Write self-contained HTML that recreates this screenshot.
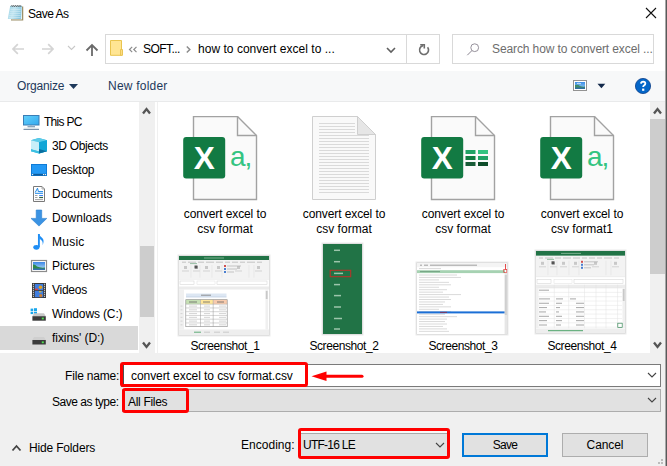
<!DOCTYPE html>
<html><head><meta charset="utf-8">
<style>
*{margin:0;padding:0;box-sizing:border-box}
html,body{width:667px;height:466px;overflow:hidden}
body{position:relative;background:#f0f0f0;font-family:"Liberation Sans",sans-serif;font-size:12px;color:#000}
.a{position:absolute}
.t{position:absolute;white-space:nowrap;line-height:12px;font-size:12px}
</style></head><body>
<!-- top white area -->
<div class="a" style="left:0;top:0;width:667px;height:71px;background:#fff"></div>
<!-- title -->
<svg class="a" style="left:0;top:0" width="30" height="26" viewBox="0 0 30 26">
  <defs><linearGradient id="np" x1="0" y1="0" x2="1" y2="0.3"><stop offset="0" stop-color="#9ad3e6"/><stop offset="0.5" stop-color="#c3e6f1"/><stop offset="1" stop-color="#8cc8e0"/></linearGradient></defs>
  <path d="M11 19.8 H22.6 V6.5" fill="none" stroke="#9c9068" stroke-width="1.3"/>
  <path d="M11.5 7 H22 V19.2 H11.5 Z" fill="#fdfdfd"/>
  <path d="M10.2 5.8 H21.8 L21.2 19 H7.8 Z" fill="url(#np)"/>
  <path d="M10.5 9.5 H20.5 M10 11.5 H20.5 M9.6 13.5 H20.5 M9.2 15.5 H20.5 M8.8 17.5 H20.5" stroke="#d6eef7" stroke-width="0.7" opacity="0.8"/>
  <path d="M11 6.5 Q11.9 4.6 12.8 6.5 Q13.7 4.6 14.6 6.5 Q15.5 4.6 16.4 6.5 Q17.3 4.6 18.2 6.5 Q19.1 4.6 20 6.5 Q20.6 5 21.2 6.3" stroke="#333" stroke-width="0.9" fill="none"/>
</svg>
<div class="t" id="title" style="letter-spacing:-0.5px;left:28px;top:8px;">Save As</div>
<!-- close -->
<svg class="a" style="left:645px;top:7px" width="12" height="12" viewBox="0 0 12 12"><path d="M1 1 L11 11 M11 1 L1 11" stroke="#111" stroke-width="1.1"/></svg>

<!-- nav arrows -->
<svg class="a" style="left:0;top:30px" width="110" height="30" viewBox="0 30 110 30"><path d="M13.2 49 H24 M17.8 44.2 L13 49 L17.8 53.8 M42 49 H52.8 M48.2 44.2 L53 49 L48.2 53.8" stroke="#d4d4d4" stroke-width="1.7" fill="none"/></svg>

<svg class="a" style="left:67px;top:45px" width="9" height="6" viewBox="0 0 9 6"><path d="M1 1 L4.5 4.5 L8 1" stroke="#c8c8c8" stroke-width="1.1" fill="none"/></svg>
<svg class="a" style="left:85px;top:43px" width="14" height="14" viewBox="0 0 14 14"><path d="M7 13 V2 M1.5 7.5 L7 2 L12.5 7.5" stroke="#6a6a6a" stroke-width="1.8" fill="none"/></svg>

<!-- address bar -->
<div class="a" style="left:105px;top:34px;width:335px;height:30px;border:1px solid #d9d9d9;background:#fff"></div>
<div class="a" style="left:406px;top:35px;width:1px;height:28px;background:#d9d9d9"></div>
<svg class="a" style="left:110px;top:40px" width="14" height="17" viewBox="0 0 14 17">
  <path d="M0.5 0.5 H11.5 V15.3 H0.5 Z" fill="#ffe593" stroke="#e9c44e" stroke-width="1"/>
  <path d="M10.6 9.5 H12.5 V15.3 H10.6 Z" fill="#ffe08a" stroke="#e6bf48" stroke-width="0.9"/>
</svg>
<svg class="a" style="left:128px;top:45px" width="10" height="9" viewBox="0 0 10 9"><path d="M4.2 1.8 L1.5 4.5 L4.2 7.2 M8.5 1.8 L5.8 4.5 L8.5 7.2" stroke="#8c8c8c" stroke-width="1.2" fill="none"/></svg>
<div class="t" id="soft" style="letter-spacing:-0.55px;left:143px;top:43px;">SOFT...</div>
<svg class="a" style="left:185px;top:45px" width="7" height="9" viewBox="0 0 7 9"><path d="M1.8 1.5 L4.8 4.5 L1.8 7.5" stroke="#8c8c8c" stroke-width="1.5" fill="none"/></svg>
<div class="t" id="addr" style="letter-spacing:0.027px;left:198px;top:43px;">how to convert excel to ...</div>
<svg class="a" style="left:386px;top:47px" width="10" height="7" viewBox="0 0 10 7"><path d="M1 1 L5 5 L9 1" stroke="#606060" stroke-width="1.6" fill="none"/></svg>
<svg class="a" style="left:410px;top:38px" width="30" height="22" viewBox="0 0 30 22"><path d="M17.6 9.3 A4.5 4.5 0 1 1 13.2 7.6" stroke="#6e6e6e" stroke-width="1.6" fill="none"/><path d="M10.2 6.7 H14.3 V10.6" stroke="#6e6e6e" stroke-width="1.6" fill="none"/></svg>

<!-- search -->
<div class="a" style="left:452px;top:34px;width:202px;height:30px;border:1px solid #d9d9d9;background:#fff"></div>
<svg class="a" style="left:466px;top:43px" width="14" height="13" viewBox="0 0 14 13"><circle cx="8.7" cy="4.7" r="3.9" stroke="#8a8490" stroke-width="0.9" fill="none"/><path d="M5.9 7.6 L1.3 12.2" stroke="#8a8490" stroke-width="1"/></svg>
<div class="t" id="search" style="letter-spacing:-0.11px;left:492px;top:43px;color:#6d6d6d">Search how to convert excel ...</div>

<!-- toolbar -->
<div class="a" style="left:0;top:71px;width:667px;height:31px;background:#f7f8f9;border-bottom:1px solid #e9eaeb"></div>
<div class="t" id="org" style="letter-spacing:-0.186px;left:17px;top:80px;color:#1e395b">Organize</div>
<svg class="a" style="left:69px;top:84px" width="9" height="5" viewBox="0 0 9 5"><path d="M0 0 H9 L4.5 5 Z" fill="#1e395b"/></svg>
<div class="t" id="newf" style="letter-spacing:0.222px;left:108px;top:80px;color:#1e395b">New folder</div>
<svg class="a" style="left:573px;top:80px" width="14" height="11" viewBox="0 0 14 11"><defs><linearGradient id="sky" x1="0" y1="0" x2="0" y2="1"><stop offset="0" stop-color="#3b8ee8"/><stop offset="1" stop-color="#9fd0f0"/></linearGradient></defs><rect x="0.5" y="0.5" width="13" height="10" fill="#fff" stroke="#929292"/><rect x="2" y="2" width="10" height="7" fill="url(#sky)"/><path d="M2 5 Q5 4 7 6 Q10 7 12 6.5 V9 H2 Z" fill="#3f8a6a"/><path d="M2 7.5 H12 V9 H2 Z" fill="#2f6fa0"/><path d="M4 3.5 Q6 2.8 8 3.8" stroke="#e8f4fb" stroke-width="0.8" fill="none"/></svg>
<svg class="a" style="left:597px;top:83px" width="9" height="6" viewBox="0 0 9 6"><path d="M0.5 0.8 H8.3 L4.4 5.3 Z" fill="#13294b"/></svg>
<svg class="a" style="left:635px;top:78px" width="16" height="16" viewBox="0 0 16 16"><circle cx="8" cy="8" r="7.6" fill="#0466c8" stroke="#0b3f8a" stroke-width="0.8"/><path d="M6 5.6 Q6.2 3.6 8.2 3.6 Q10.4 3.7 10.3 5.6 Q10.2 6.8 8.9 7.5 Q8.2 7.9 8.2 9" stroke="#fff" stroke-width="1.9" fill="none"/><rect x="7.1" y="10.6" width="2.2" height="2.2" fill="#fff"/></svg>


<!-- nav pane -->
<div class="a" style="left:0;top:102px;width:157px;height:251px;background:#fff"></div>
<div class="a" style="left:157px;top:102px;width:1px;height:251px;background:#f0f0f0"></div>
<div class="a" style="left:0;top:326px;width:138px;height:24px;background:#d9d9d9"></div>
<div class="a" style="left:139px;top:102px;width:16px;height:251px;background:#f0f0f0"></div>
<div class="a" style="left:140px;top:246px;width:14px;height:71px;background:#cdcdcd"></div>
<svg class="a" style="left:142px;top:107px" width="9" height="8" viewBox="0 0 9 8"><path d="M1 6.5 L4.5 2 L8 6.5" stroke="#555" stroke-width="2.3" fill="none"/></svg>
<svg class="a" style="left:142px;top:341px" width="9" height="8" viewBox="0 0 9 8"><path d="M1 1.5 L4.5 6 L8 1.5" stroke="#555" stroke-width="2.3" fill="none"/></svg>

<!-- nav icons -->
<svg class="a" style="left:0;top:100px" width="60" height="252" viewBox="0 100 60 252">
<defs>
<linearGradient id="mon" x1="0" y1="0" x2="1" y2="1"><stop offset="0" stop-color="#62d0fa"/><stop offset="1" stop-color="#33a9ef"/></linearGradient>
<linearGradient id="sky2" x1="0" y1="0" x2="0" y2="1"><stop offset="0" stop-color="#3a86e6"/><stop offset="1" stop-color="#bfe3f5"/></linearGradient>
</defs>
<!-- This PC -->
<rect x="23.5" y="115.5" width="15.5" height="9.5" fill="url(#mon)" stroke="#3a7db5" stroke-width="1"/>
<path d="M27.5 126.8 H35" stroke="#5b7f9f" stroke-width="1"/><path d="M31 125 V126.3" stroke="#9ab" stroke-width="1"/>
<path d="M23.5 129.4 H39" stroke="#7d93aa" stroke-width="1.2"/><path d="M24 128.2 H38.5" stroke="#d8e4ea" stroke-width="1"/>
<!-- 3D objects -->
<path d="M38.8 138 L47 140.2 V151.2 L39 153.6 L31 151.2 V140.2 Z" fill="#25b3dc"/>
<path d="M31 140.2 L38.8 138 L47 140.2 L39 142.2 Z" fill="#5ccbe8"/>
<path d="M31 140.2 L39 142.2 V151.5 L31 149.3 Z" fill="#c8eef8"/>
<path d="M39 142.2 L47 140.2 V151.2 L39 153.6 Z" fill="#12a6d6"/>
<path d="M39 149 L47 151.2 L39 153.6 Z" fill="#0a6d9e"/>
<path d="M31 149.3 L39 151.5 V153.6 L31 151.2 Z" fill="#3cc0e2"/>
<!-- Desktop -->
<rect x="31.5" y="164.5" width="15" height="11" fill="#2399f5" stroke="#0f7bd6" stroke-width="1"/>
<rect x="32" y="173.8" width="14" height="1.7" fill="#0d5c9c"/>
<circle cx="32.6" cy="174.6" r="0.7" fill="#fff"/><circle cx="43.6" cy="174.6" r="0.7" fill="#fff"/><circle cx="45.4" cy="174.6" r="0.7" fill="#fff"/>
<!-- Documents -->
<path d="M33.5 186.5 H42 L44.5 189 V201.5 H33.5 Z" fill="#fff" stroke="#7a7a7a" stroke-width="1"/>
<path d="M42 186.5 V189 H44.5" fill="none" stroke="#9a9a9a" stroke-width="0.8"/>
<path d="M35.2 192.5 L37.5 188.2 L38.5 192" stroke="#1e88e5" stroke-width="1" fill="none"/>
<path d="M39 191.6 H43 M35 193.3 H43" stroke="#1e88e5" stroke-width="1"/>
<path d="M35 195.5 H37.5 M35 197.5 H37.5 M35 199.6 H43" stroke="#9a9a9a" stroke-width="0.9"/>
<path d="M39.2 195.5 H43 " stroke="#3b82f6" stroke-width="1"/><path d="M39.2 197.5 H43" stroke="#2f6040" stroke-width="1.2"/>
<!-- Downloads -->
<path d="M36.2 210 H41.7 V218.4 H46.8 L39 226.1 L31 218.4 H36.2 Z" fill="#3b93e3" stroke="#2a7fd0" stroke-width="0.6"/>
<!-- Music -->
<path d="M38.9 234 V247" stroke="#1f8ef5" stroke-width="1.9"/>
<ellipse cx="36.4" cy="247.3" rx="3.1" ry="2.4" fill="#1f8ef5"/>
<path d="M38.9 234 Q40 236.5 42.5 238.2 Q44.6 240.5 42.6 245.2 Q43.4 240.8 39.5 238.8 Z" fill="#1f8ef5"/>
<!-- Pictures -->
<rect x="31.5" y="260.5" width="15" height="11" fill="#fff" stroke="#8c8c8c" stroke-width="1.2"/>
<rect x="33" y="262" width="12" height="8" fill="url(#sky2)"/>
<path d="M33 264.5 Q35 264 37 266.5 Q40 268 45 267.5 V270 H33 Z" fill="#2f8a4a"/>
<path d="M33 268.5 H45 V270 H33 Z" fill="#3470b0"/>
<!-- Videos -->
<rect x="32" y="283" width="14" height="15" fill="#3a3a3a"/>
<rect x="34.8" y="284" width="8.4" height="6.2" fill="#3f7ee0"/>
<rect x="34.8" y="291" width="8.4" height="6.2" fill="#3f7ee0"/>
<circle cx="40.5" cy="287.2" r="1.8" fill="#e0a020"/><rect x="35" y="288.6" width="3" height="1.5" fill="#e04040"/>
<circle cx="40.8" cy="295.6" r="1.6" fill="#d08030"/><rect x="39" y="291.2" width="2.5" height="1.2" fill="#e0c030"/>
<path d="M33.4 283.8 V297.5 M44.6 283.8 V297.5" stroke="#f4f4f4" stroke-width="1" stroke-dasharray="1 1"/>
<!-- Windows C -->
<rect x="30.6" y="308.6" width="2.6" height="2.4" fill="#1aa7ec"/><rect x="34" y="308.2" width="3" height="2.8" fill="#1aa7ec"/>
<rect x="30.6" y="311.7" width="2.6" height="2.4" fill="#1aa7ec"/><rect x="34" y="311.7" width="3" height="2.8" fill="#1aa7ec"/>
<path d="M34 313.2 H44 L45.8 316.2 H32.4 Z" fill="#c8c8c8"/>
<rect x="32.4" y="316.2" width="13.4" height="4.5" fill="#3b3b3b"/>
<rect x="41.8" y="317.6" width="2" height="1.8" fill="#4fe24f"/>
<!-- D -->
<path d="M34 337 H44 L45.8 340 H32.4 Z" fill="#cfcfcf"/>
<rect x="32.4" y="340" width="13.4" height="4.5" fill="#3b3b3b"/>
<rect x="41.8" y="341.4" width="2" height="1.8" fill="#4fe24f"/>
</svg>
<div class="t" id="n0" style="letter-spacing:-0.717px;left:44px;top:116px">This PC</div>
<div class="t" id="n1" style="letter-spacing:-0.333px;left:52px;top:140px">3D Objects</div>
<div class="t" id="n2" style="letter-spacing:-0.25px;left:52px;top:164px">Desktop</div>
<div class="t" id="n3" style="letter-spacing:-0.013px;left:52px;top:188px">Documents</div>
<div class="t" id="n4" style="letter-spacing:0.05px;left:52px;top:212px">Downloads</div>
<div class="t" id="n5" style="letter-spacing:0.25px;left:52px;top:236px">Music</div>
<div class="t" id="n6" style="letter-spacing:-0.086px;left:52px;top:260px">Pictures</div>
<div class="t" id="n7" style="letter-spacing:-0.26px;left:52px;top:284px">Videos</div>
<div class="t" id="n8" style="letter-spacing:-0.127px;left:52px;top:308px">Windows (C:)</div>
<div class="t" id="n9" style="letter-spacing:-0.055px;left:52px;top:332px">fixins' (D:)</div>

<!-- file pane -->
<div class="a" style="left:158px;top:102px;width:492px;height:251px;background:#fff"></div>
<div class="a" style="left:650px;top:102px;width:15px;height:251px;background:#f0f0f0"></div>
<div class="a" style="left:650px;top:119px;width:15px;height:155px;background:#cdcdcd"></div>
<svg class="a" style="left:653px;top:107px" width="9" height="8" viewBox="0 0 9 8"><path d="M1 6.5 L4.5 2 L8 6.5" stroke="#555" stroke-width="2.3" fill="none"/></svg>
<svg class="a" style="left:653px;top:341px" width="9" height="8" viewBox="0 0 9 8"><path d="M1 1.5 L4.5 6 L8 1.5" stroke="#555" stroke-width="2.3" fill="none"/></svg>


<!-- items -->
<svg class="a" style="left:183px;top:116px" width="76" height="86" viewBox="0 0 76 86">
<path d="M10.5 0.5 H54.5 L73.5 19.5 V83.5 H10.5 Z" fill="#fafafa" stroke="#a2a2a2" stroke-width="1.4"/>
<path d="M54.5 0.5 V19.5 H73.5" fill="none" stroke="#a2a2a2" stroke-width="1.4"/>
<rect x="0.2" y="21" width="42" height="41.5" rx="3" fill="#127a43"/>
<text x="21.2" y="53.3" text-anchor="middle" font-family="Liberation Sans" font-weight="bold" font-size="31.5" fill="#fff">X</text>
<text x="47" y="49.5" font-family="Liberation Sans" font-size="28" letter-spacing="-1" fill="#33c481">a,</text>
</svg><div class="t" id="f1a" style="letter-spacing:-0.1px;left:165px;width:120px;text-align:center;top:208px">convert excel to</div><div class="t" id="f1b" style="letter-spacing:0.033px;left:165px;width:120px;text-align:center;top:223px">csv format</div><svg class="a" style="left:302px;top:116px" width="76" height="86" viewBox="0 0 76 86">
<path d="M10.5 0.5 H55.5 L73.5 18.5 V83.5 H10.5 Z" fill="#f9f9f9" stroke="#cfcfcf" stroke-width="1"/>
<path d="M17 7.5 H53" stroke="#dadada" stroke-width="1"/><path d="M17 10.5 H53" stroke="#dadada" stroke-width="1"/><path d="M17 13.5 H53" stroke="#dadada" stroke-width="1"/><path d="M17 16.5 H53" stroke="#dadada" stroke-width="1"/><path d="M17 19.5 H67" stroke="#dadada" stroke-width="1"/><path d="M17 22.5 H67" stroke="#dadada" stroke-width="1"/><path d="M17 25.5 H67" stroke="#dadada" stroke-width="1"/><path d="M17 28.5 H67" stroke="#dadada" stroke-width="1"/><path d="M17 31.5 H67" stroke="#dadada" stroke-width="1"/><path d="M17 34.5 H67" stroke="#dadada" stroke-width="1"/><path d="M17 37.5 H67" stroke="#dadada" stroke-width="1"/><path d="M17 40.5 H67" stroke="#dadada" stroke-width="1"/><path d="M17 43.5 H67" stroke="#dadada" stroke-width="1"/><path d="M17 46.5 H67" stroke="#dadada" stroke-width="1"/><path d="M17 49.5 H67" stroke="#dadada" stroke-width="1"/><path d="M17 52.5 H67" stroke="#dadada" stroke-width="1"/><path d="M17 55.5 H67" stroke="#dadada" stroke-width="1"/><path d="M17 58.5 H67" stroke="#dadada" stroke-width="1"/><path d="M17 61.5 H67" stroke="#dadada" stroke-width="1"/><path d="M17 64.5 H67" stroke="#dadada" stroke-width="1"/><path d="M17 67.5 H67" stroke="#dadada" stroke-width="1"/><path d="M17 70.5 H67" stroke="#dadada" stroke-width="1"/><path d="M17 73.5 H67" stroke="#dadada" stroke-width="1"/><path d="M17 76.5 H67" stroke="#dadada" stroke-width="1"/>
<path d="M55.5 0.5 V18.5 H73.5 Z" fill="#e6e6e6" stroke="#cfcfcf" stroke-width="1"/>
</svg><div class="t" id="f2a" style="letter-spacing:-0.1px;left:284px;width:120px;text-align:center;top:208px">convert excel to</div><div class="t" id="f2b" style="letter-spacing:0.033px;left:284px;width:120px;text-align:center;top:223px">csv format</div><svg class="a" style="left:421px;top:116px" width="76" height="86" viewBox="0 0 76 86">
<path d="M10.5 0.5 H54.5 L73.5 19.5 V83.5 H10.5 Z" fill="#fafafa" stroke="#a2a2a2" stroke-width="1.4"/>
<path d="M54.5 0.5 V19.5 H73.5" fill="none" stroke="#a2a2a2" stroke-width="1.4"/>
<rect x="0.2" y="21" width="42" height="41.5" rx="3" fill="#127a43"/>
<text x="21.2" y="53.3" text-anchor="middle" font-family="Liberation Sans" font-weight="bold" font-size="31.5" fill="#fff">X</text>
<rect x="44.5" y="34" width="10" height="4" fill="#21a366"/><rect x="57" y="34" width="10" height="4" fill="#33c481"/>
<rect x="44.5" y="40" width="10" height="4" fill="#107c41"/><rect x="57" y="40" width="10" height="4" fill="#21a366"/>
<rect x="44.5" y="46" width="10" height="4" fill="#185c37"/><rect x="57" y="46" width="10" height="4" fill="#0e4d2a"/>
</svg><div class="t" id="f3a" style="letter-spacing:-0.1px;left:403px;width:120px;text-align:center;top:208px">convert excel to</div><div class="t" id="f3b" style="letter-spacing:0.033px;left:403px;width:120px;text-align:center;top:223px">csv format</div><svg class="a" style="left:540px;top:116px" width="76" height="86" viewBox="0 0 76 86">
<path d="M10.5 0.5 H54.5 L73.5 19.5 V83.5 H10.5 Z" fill="#fafafa" stroke="#a2a2a2" stroke-width="1.4"/>
<path d="M54.5 0.5 V19.5 H73.5" fill="none" stroke="#a2a2a2" stroke-width="1.4"/>
<rect x="0.2" y="21" width="42" height="41.5" rx="3" fill="#127a43"/>
<text x="21.2" y="53.3" text-anchor="middle" font-family="Liberation Sans" font-weight="bold" font-size="31.5" fill="#fff">X</text>
<text x="47" y="49.5" font-family="Liberation Sans" font-size="28" letter-spacing="-1" fill="#33c481">a,</text>
</svg><div class="t" id="f4a" style="letter-spacing:-0.1px;left:522px;width:120px;text-align:center;top:208px">convert excel to</div><div class="t" id="f4b" style="left:522px;width:120px;text-align:center;top:223px">csv format1</div>
<!-- thumbs --><svg class="a" style="left:179px;top:256px;overflow:visible" width="90" height="79" viewBox="0 0 90 79"><rect x="-1.5" y="-1.5" width="93" height="82" fill="#ececec"/><rect x="-0.5" y="-0.5" width="91" height="80" fill="#d4d4d4"/><rect x="0" y="0" width="90" height="79" fill="#fff"/><rect x="0" y="0" width="90" height="4" fill="#217346"/><path d="M25 2.0 H45" stroke="#8fbfa0" stroke-width="0.8"/><rect x="0" y="4" width="90" height="19.5" fill="#f3f3f3"/><path d="M3 6.2 H7" stroke="#b8b8b8" stroke-width="0.8"/><path d="M9 6.2 H17" stroke="#b8b8b8" stroke-width="0.8"/><path d="M19 6.2 H25" stroke="#b8b8b8" stroke-width="0.8"/><path d="M27 6.2 H35" stroke="#b8b8b8" stroke-width="0.8"/><path d="M37 6.2 H44" stroke="#b8b8b8" stroke-width="0.8"/><path d="M46 6.2 H51" stroke="#b8b8b8" stroke-width="0.8"/><path d="M53 6.2 H59" stroke="#b8b8b8" stroke-width="0.8"/><path d="M61 6.2 H66" stroke="#b8b8b8" stroke-width="0.8"/><path d="M68 6.2 H76" stroke="#b8b8b8" stroke-width="0.8"/><path d="M78 6.2 H83" stroke="#b8b8b8" stroke-width="0.8"/><path d="M11 7.6 H18" stroke="#5a9a70" stroke-width="0.6"/><rect x="5" y="10" width="3" height="3" fill="#c8c8c8"/><path d="M3 15 H10" stroke="#c4c4c4" stroke-width="0.7"/><rect x="16" y="10" width="3" height="3" fill="#c8c8c8"/><path d="M14 15 H21" stroke="#c4c4c4" stroke-width="0.7"/><rect x="26" y="10" width="3" height="3" fill="#c8c8c8"/><path d="M24 15 H31" stroke="#c4c4c4" stroke-width="0.7"/><rect x="38" y="10" width="3" height="3" fill="#c8c8c8"/><path d="M36 15 H43" stroke="#c4c4c4" stroke-width="0.7"/><rect x="58" y="10" width="3" height="3" fill="#c8c8c8"/><path d="M56 15 H63" stroke="#c4c4c4" stroke-width="0.7"/><rect x="78" y="10" width="3" height="3" fill="#c8c8c8"/><path d="M76 15 H83" stroke="#c4c4c4" stroke-width="0.7"/><rect x="15.5" y="9.5" width="3" height="3" fill="#555"/><rect x="45" y="9" width="2" height="2" fill="#d05050"/><path d="M48 10 H62" stroke="#b0b0b0" stroke-width="0.7"/><rect x="45" y="12" width="2" height="2" fill="#4a7fd0"/><path d="M48 13 H58" stroke="#b0b0b0" stroke-width="0.7"/><rect x="45" y="15" width="2" height="2" fill="#4a7fd0"/><path d="M48 16 H55" stroke="#b0b0b0" stroke-width="0.7"/><path d="M12 9 V21.5" stroke="#e2e2e2" stroke-width="0.6"/><path d="M21 9 V21.5" stroke="#e2e2e2" stroke-width="0.6"/><path d="M33 9 V21.5" stroke="#e2e2e2" stroke-width="0.6"/><path d="M43 9 V21.5" stroke="#e2e2e2" stroke-width="0.6"/><path d="M70 9 V21.5" stroke="#e2e2e2" stroke-width="0.6"/><path d="M75 9 V21.5" stroke="#e2e2e2" stroke-width="0.6"/><path d="M0 23.5 H90" stroke="#d6d6d6" stroke-width="0.6"/><rect x="0" y="23.5" width="90" height="7.0" fill="#fff"/><rect x="1" y="25" width="14" height="3.5" fill="#fff" stroke="#d0d0d0" stroke-width="0.5"/><rect x="18" y="25" width="18" height="3.5" fill="#fff" stroke="#e0e0e0" stroke-width="0.5"/><rect x="38" y="25" width="50" height="3.5" fill="#fff" stroke="#d0d0d0" stroke-width="0.5"/><rect x="0" y="30.5" width="90" height="3.0" fill="#ececec"/><rect x="0" y="33.5" width="5" height="40" fill="#f0f0f0"/><rect x="7" y="37.5" width="40.5" height="3.3" fill="#dde7f3"/><path d="M22 39.2 H32" stroke="#777" stroke-width="0.8"/><path d="M7 41 H47.5" stroke="#9ab0d0" stroke-width="0.5"/><rect x="6.8" y="43.7" width="14.7" height="4.5" fill="#c6e0b4"/><rect x="21.5" y="43.7" width="12.7" height="4.5" fill="#ffe699"/><rect x="34.2" y="43.7" width="14" height="4.5" fill="#f8cbad"/><path d="M10 46 H18" stroke="#666" stroke-width="0.8"/><path d="M24 46 H31" stroke="#666" stroke-width="0.8"/><path d="M38 46 H45" stroke="#666" stroke-width="0.8"/><rect x="6.8" y="43.7" width="41.4" height="27" fill="none" stroke="#888" stroke-width="0.6"/><path d="M6.8 48.2 H48.2" stroke="#aaa" stroke-width="0.5"/><path d="M10 50.1 H18 M25 50.1 H31 M40 50.1 H47" stroke="#c0c0c0" stroke-width="0.7"/><path d="M1.5 50.1 H3.5" stroke="#c0c0c0" stroke-width="0.6"/><path d="M6.8 51.95 H48.2" stroke="#aaa" stroke-width="0.5"/><path d="M10 53.85 H18 M25 53.85 H31 M40 53.85 H47" stroke="#c0c0c0" stroke-width="0.7"/><path d="M1.5 53.85 H3.5" stroke="#c0c0c0" stroke-width="0.6"/><path d="M6.8 55.7 H48.2" stroke="#aaa" stroke-width="0.5"/><path d="M10 57.6 H18 M25 57.6 H31 M40 57.6 H47" stroke="#c0c0c0" stroke-width="0.7"/><path d="M1.5 57.6 H3.5" stroke="#c0c0c0" stroke-width="0.6"/><path d="M6.8 59.45 H48.2" stroke="#aaa" stroke-width="0.5"/><path d="M10 61.35 H18 M25 61.35 H31 M40 61.35 H47" stroke="#c0c0c0" stroke-width="0.7"/><path d="M1.5 61.35 H3.5" stroke="#c0c0c0" stroke-width="0.6"/><path d="M6.8 63.2 H48.2" stroke="#aaa" stroke-width="0.5"/><path d="M10 65.10000000000001 H18 M25 65.10000000000001 H31 M40 65.10000000000001 H47" stroke="#c0c0c0" stroke-width="0.7"/><path d="M1.5 65.10000000000001 H3.5" stroke="#c0c0c0" stroke-width="0.6"/><path d="M6.8 66.95 H48.2" stroke="#aaa" stroke-width="0.5"/><path d="M10 68.85000000000001 H18 M25 68.85000000000001 H31 M40 68.85000000000001 H47" stroke="#c0c0c0" stroke-width="0.7"/><path d="M1.5 68.85000000000001 H3.5" stroke="#c0c0c0" stroke-width="0.6"/><path d="M21.5 43.7 V70.7 M34.2 43.7 V70.7" stroke="#999" stroke-width="0.5"/><rect x="86.5" y="33.5" width="2.5" height="40" fill="#f0f0f0"/><rect x="86.8" y="35" width="1.8" height="8" fill="#c8c8c8"/><rect x="0" y="73.5" width="90" height="5.5" fill="#eeeeee"/><path d="M15 76.2 H22" stroke="#3a9a5a" stroke-width="0.8"/><path d="M25 76.2 H31 M35 76.2 H41 M44 76.2 H50" stroke="#bbb" stroke-width="0.7"/></svg><svg class="a" style="left:323px;top:244px;overflow:visible" width="39" height="90" viewBox="0 0 39 90"><rect x="-1.5" y="-1.5" width="42" height="93" fill="#ececec"/><rect x="-0.5" y="-0.5" width="40" height="91" fill="#d4d4d4"/><rect x="0" y="0" width="39" height="90" fill="#217346"/><path d="M11 6.3 H17" stroke="#9cc5ab" stroke-width="1.5"/><path d="M11 17.7 H17" stroke="#9cc5ab" stroke-width="1.5"/><path d="M11 29.4 H20" stroke="#9cc5ab" stroke-width="1.5"/><path d="M11 40.6 H17" stroke="#9cc5ab" stroke-width="1.5"/><path d="M11 51.6 H18" stroke="#9cc5ab" stroke-width="1.5"/><path d="M11 63 H18" stroke="#9cc5ab" stroke-width="1.5"/><path d="M11 74.5 H19" stroke="#9cc5ab" stroke-width="1.5"/><path d="M11 85 H17" stroke="#9cc5ab" stroke-width="1.5"/><rect x="7.2" y="26.3" width="20.5" height="6.4" fill="none" stroke="#b5342a" stroke-width="1.1"/></svg><svg class="a" style="left:417px;top:263px;overflow:visible" width="90" height="71" viewBox="0 0 90 71"><rect x="-1.5" y="-1.5" width="93" height="74" fill="#ececec"/><rect x="-0.5" y="-0.5" width="91" height="72" fill="#d4d4d4"/><rect x="0" y="0" width="90" height="71" fill="#fff"/><rect x="0" y="0" width="90" height="4.2" fill="#f4f4f4"/><path d="M3 2.2 H5 M7 2.2 H11 M13 2.2 H60" stroke="#8a8a8a" stroke-width="0.8"/><path d="M2 5.6 H24" stroke="#c8c8c8" stroke-width="0.7"/><rect x="0" y="7.2" width="88" height="2.9" fill="#a6d2b2"/><path d="M3 8.6 H23" stroke="#5f8f6e" stroke-width="0.7"/><path d="M2 12 H40" stroke="#cdcdcd" stroke-width="0.75"/><path d="M2 14.45 H44" stroke="#cdcdcd" stroke-width="0.75"/><path d="M2 16.9 H22" stroke="#cdcdcd" stroke-width="0.75"/><path d="M2 19.349999999999998 H32" stroke="#cdcdcd" stroke-width="0.75"/><path d="M2 21.799999999999997 H34" stroke="#cdcdcd" stroke-width="0.75"/><path d="M2 24.249999999999996 H22" stroke="#cdcdcd" stroke-width="0.75"/><path d="M2 26.699999999999996 H30" stroke="#cdcdcd" stroke-width="0.75"/><path d="M2 29.149999999999995 H26" stroke="#cdcdcd" stroke-width="0.75"/><path d="M2 31.599999999999994 H44" stroke="#cdcdcd" stroke-width="0.75"/><path d="M2 34.05 H32" stroke="#cdcdcd" stroke-width="0.75"/><path d="M2 36.5 H34" stroke="#cdcdcd" stroke-width="0.75"/><path d="M2 38.95 H28" stroke="#cdcdcd" stroke-width="0.75"/><path d="M2 41.400000000000006 H26" stroke="#cdcdcd" stroke-width="0.75"/><path d="M2 43.85000000000001 H34" stroke="#cdcdcd" stroke-width="0.75"/><path d="M2 46.30000000000001 H22" stroke="#cdcdcd" stroke-width="0.75"/><path d="M2 48.750000000000014 H34" stroke="#cdcdcd" stroke-width="0.75"/><path d="M2 51.20000000000002 H28" stroke="#cdcdcd" stroke-width="0.75"/><path d="M2 53.65000000000002 H40" stroke="#cdcdcd" stroke-width="0.75"/><path d="M2 56.10000000000002 H30" stroke="#cdcdcd" stroke-width="0.75"/><path d="M2 58.550000000000026 H28" stroke="#cdcdcd" stroke-width="0.75"/><path d="M2 61.00000000000003 H30" stroke="#cdcdcd" stroke-width="0.75"/><path d="M2 63.45000000000003 H26" stroke="#cdcdcd" stroke-width="0.75"/><path d="M2 65.90000000000003 H30" stroke="#cdcdcd" stroke-width="0.75"/><path d="M2 68.35000000000004 H32" stroke="#cdcdcd" stroke-width="0.75"/><rect x="0" y="48.4" width="88" height="2" fill="#1b6fd6"/><path d="M23 49.4 H30" stroke="#8a3050" stroke-width="0.9"/><rect x="87.6" y="10" width="2.4" height="61" fill="#e6e6e6"/><rect x="87.8" y="12" width="2" height="40" fill="#cfcfcf"/><path d="M88.5 1 V6.5" stroke="#e02020" stroke-width="0.8"/><rect x="86.8" y="6.5" width="3" height="3" fill="none" stroke="#e02020" stroke-width="0.6"/></svg><svg class="a" style="left:536px;top:251px;overflow:visible" width="89" height="82" viewBox="0 0 89 82"><rect x="-1.5" y="-1.5" width="92" height="85" fill="#ececec"/><rect x="-0.5" y="-0.5" width="90" height="83" fill="#d4d4d4"/><rect x="0" y="0" width="89" height="82" fill="#fff"/><rect x="0" y="0" width="89" height="4.8" fill="#217346"/><path d="M25 2.4 H45" stroke="#8fbfa0" stroke-width="0.8"/><rect x="0" y="4.8" width="89" height="21.4" fill="#f3f3f3"/><path d="M3 7.0 H7" stroke="#b8b8b8" stroke-width="0.8"/><path d="M9 7.0 H17" stroke="#b8b8b8" stroke-width="0.8"/><path d="M19 7.0 H25" stroke="#b8b8b8" stroke-width="0.8"/><path d="M27 7.0 H35" stroke="#b8b8b8" stroke-width="0.8"/><path d="M37 7.0 H44" stroke="#b8b8b8" stroke-width="0.8"/><path d="M46 7.0 H51" stroke="#b8b8b8" stroke-width="0.8"/><path d="M53 7.0 H59" stroke="#b8b8b8" stroke-width="0.8"/><path d="M61 7.0 H66" stroke="#b8b8b8" stroke-width="0.8"/><path d="M68 7.0 H76" stroke="#b8b8b8" stroke-width="0.8"/><path d="M78 7.0 H83" stroke="#b8b8b8" stroke-width="0.8"/><path d="M11 8.4 H18" stroke="#5a9a70" stroke-width="0.6"/><rect x="5" y="10.8" width="3" height="3" fill="#c8c8c8"/><path d="M3 15.8 H10" stroke="#c4c4c4" stroke-width="0.7"/><rect x="16" y="10.8" width="3" height="3" fill="#c8c8c8"/><path d="M14 15.8 H21" stroke="#c4c4c4" stroke-width="0.7"/><rect x="26" y="10.8" width="3" height="3" fill="#c8c8c8"/><path d="M24 15.8 H31" stroke="#c4c4c4" stroke-width="0.7"/><rect x="38" y="10.8" width="3" height="3" fill="#c8c8c8"/><path d="M36 15.8 H43" stroke="#c4c4c4" stroke-width="0.7"/><rect x="58" y="10.8" width="3" height="3" fill="#c8c8c8"/><path d="M56 15.8 H63" stroke="#c4c4c4" stroke-width="0.7"/><rect x="78" y="10.8" width="3" height="3" fill="#c8c8c8"/><path d="M76 15.8 H83" stroke="#c4c4c4" stroke-width="0.7"/><rect x="15.5" y="10.3" width="3" height="3" fill="#555"/><rect x="45" y="9.8" width="2" height="2" fill="#d05050"/><path d="M48 10.8 H62" stroke="#b0b0b0" stroke-width="0.7"/><rect x="45" y="12.8" width="2" height="2" fill="#4a7fd0"/><path d="M48 13.8 H58" stroke="#b0b0b0" stroke-width="0.7"/><rect x="45" y="15.8" width="2" height="2" fill="#4a7fd0"/><path d="M48 16.8 H55" stroke="#b0b0b0" stroke-width="0.7"/><path d="M12 9.8 V24.2" stroke="#e2e2e2" stroke-width="0.6"/><path d="M21 9.8 V24.2" stroke="#e2e2e2" stroke-width="0.6"/><path d="M33 9.8 V24.2" stroke="#e2e2e2" stroke-width="0.6"/><path d="M43 9.8 V24.2" stroke="#e2e2e2" stroke-width="0.6"/><path d="M70 9.8 V24.2" stroke="#e2e2e2" stroke-width="0.6"/><path d="M75 9.8 V24.2" stroke="#e2e2e2" stroke-width="0.6"/><path d="M0 26.2 H89" stroke="#d6d6d6" stroke-width="0.6"/><rect x="0" y="26.2" width="89" height="7.5000000000000036" fill="#fff"/><rect x="1" y="28.4" width="14" height="3.8999999999999986" fill="#fff" stroke="#d0d0d0" stroke-width="0.5"/><rect x="18" y="28.4" width="18" height="3.8999999999999986" fill="#fff" stroke="#e0e0e0" stroke-width="0.5"/><rect x="38" y="28.4" width="49" height="3.8999999999999986" fill="#fff" stroke="#d0d0d0" stroke-width="0.5"/><rect x="0" y="33.7" width="89" height="3.299999999999997" fill="#ececec"/><rect x="0" y="37" width="2.5" height="40" fill="#f0f0f0"/><path d="M18.3 33.7 V77.5" stroke="#e2e2e2" stroke-width="0.5"/><path d="M32.7 33.7 V77.5" stroke="#e2e2e2" stroke-width="0.5"/><path d="M48.5 33.7 V77.5" stroke="#e2e2e2" stroke-width="0.5"/><path d="M60 33.7 V77.5" stroke="#e2e2e2" stroke-width="0.5"/><path d="M70 33.7 V77.5" stroke="#e2e2e2" stroke-width="0.5"/><path d="M81.6 33.7 V77.5" stroke="#e2e2e2" stroke-width="0.5"/><path d="M2.5 37.0 H86" stroke="#e2e2e2" stroke-width="0.5"/><path d="M2.5 41.35 H86" stroke="#e2e2e2" stroke-width="0.5"/><path d="M2.5 45.7 H86" stroke="#e2e2e2" stroke-width="0.5"/><path d="M2.5 50.05 H86" stroke="#e2e2e2" stroke-width="0.5"/><path d="M2.5 54.4 H86" stroke="#e2e2e2" stroke-width="0.5"/><path d="M2.5 58.75 H86" stroke="#e2e2e2" stroke-width="0.5"/><path d="M2.5 63.099999999999994 H86" stroke="#e2e2e2" stroke-width="0.5"/><path d="M2.5 67.44999999999999 H86" stroke="#e2e2e2" stroke-width="0.5"/><path d="M2.5 71.8 H86" stroke="#e2e2e2" stroke-width="0.5"/><path d="M2.5 76.15 H86" stroke="#e2e2e2" stroke-width="0.5"/><path d="M3 39.2 H13" stroke="#909090" stroke-width="0.8"/><path d="M3 47.900000000000006 H14" stroke="#909090" stroke-width="0.8"/><path d="M20 47.900000000000006 H27" stroke="#909090" stroke-width="0.8"/><path d="M34 47.900000000000006 H40" stroke="#909090" stroke-width="0.8"/><path d="M3 52.25 H13" stroke="#909090" stroke-width="0.8"/><path d="M20 52.25 H26" stroke="#909090" stroke-width="0.8"/><path d="M40 52.25 H48" stroke="#909090" stroke-width="0.8"/><path d="M3 56.6 H11" stroke="#909090" stroke-width="0.8"/><path d="M20 56.6 H24" stroke="#909090" stroke-width="0.8"/><path d="M40 56.6 H48" stroke="#909090" stroke-width="0.8"/><path d="M3 60.95 H10" stroke="#909090" stroke-width="0.8"/><path d="M20 60.95 H23" stroke="#909090" stroke-width="0.8"/><path d="M40 60.95 H48" stroke="#909090" stroke-width="0.8"/><path d="M3 65.3 H13" stroke="#909090" stroke-width="0.8"/><path d="M20 65.3 H26" stroke="#909090" stroke-width="0.8"/><path d="M40 65.3 H48" stroke="#909090" stroke-width="0.8"/><path d="M3 69.65 H11" stroke="#909090" stroke-width="0.8"/><path d="M20 69.65 H26" stroke="#909090" stroke-width="0.8"/><path d="M40 69.65 H48" stroke="#909090" stroke-width="0.8"/><path d="M3 74.0 H11" stroke="#909090" stroke-width="0.8"/><path d="M20 74.0 H25" stroke="#909090" stroke-width="0.8"/><path d="M40 74.0 H48" stroke="#909090" stroke-width="0.8"/><rect x="86.5" y="37" width="2.5" height="40" fill="#f0f0f0"/><rect x="86.8" y="38" width="1.8" height="12" fill="#c8c8c8"/><rect x="0" y="77.5" width="89" height="4.5" fill="#eeeeee"/><path d="M12 79.7 H47" stroke="#3a9a5a" stroke-width="0.9"/><rect x="81.8" y="72.2" width="4.4" height="4.2" fill="none" stroke="#3a8a5a" stroke-width="0.7"/></svg><!-- /thumbs --><div class="t" id="s1" style="letter-spacing:-0.409px;left:165px;width:120px;text-align:center;top:340px">Screenshot_1</div><div class="t" id="s2" style="letter-spacing:-0.409px;left:284px;width:120px;text-align:center;top:340px">Screenshot_2</div><div class="t" id="s3" style="letter-spacing:-0.409px;left:403px;width:120px;text-align:center;top:340px">Screenshot_3</div><div class="t" id="s4" style="letter-spacing:-0.409px;left:522px;width:120px;text-align:center;top:340px">Screenshot_4</div>
<!-- bottom -->
<div class="a" style="left:0;top:353px;width:665px;height:113px;background:#f0f0f0"></div>
<div class="t" id="lfn" style="letter-spacing:-0.178px;left:65px;top:370px">File name:</div>
<div class="a" style="left:121px;top:364px;width:540px;height:23px;background:#fff;border:1px solid #7a7a7a"></div>
<svg class="a" style="left:647px;top:372px" width="10" height="7" viewBox="0 0 10 7"><path d="M1 1 L5 5 L9 1" stroke="#444" stroke-width="1.1" fill="none"/></svg>
<div class="a" style="left:123px;top:365px;width:1px;height:19px;background:#505050"></div>
<div class="t" id="fn" style="letter-spacing:-0.073px;left:131px;top:370px">convert excel to csv format.csv</div>
<div class="a" style="left:120px;top:362px;width:188px;height:25px;border:3px solid #f00;border-radius:3px"></div>
<svg class="a" style="left:310px;top:370px" width="54" height="13" viewBox="0 0 54 13"><path d="M1.5 6.3 L16.5 1.5 L16.5 11 Z" fill="#f00"/><path d="M15 6.3 H52" stroke="#f00" stroke-width="3" stroke-linecap="round"/></svg>
<div class="t" id="lst" style="letter-spacing:-0.467px;left:52px;top:396px">Save as type:</div>
<div class="a" style="left:122px;top:389px;width:539px;height:23px;background:#e1e1e1;border:1px solid #adadad"></div>
<svg class="a" style="left:647px;top:397px" width="10" height="7" viewBox="0 0 10 7"><path d="M1 1 L5 5 L9 1" stroke="#444" stroke-width="1.1" fill="none"/></svg>
<div class="t" id="st" style="letter-spacing:-0.312px;left:128px;top:396px">All Files</div>
<div class="a" style="left:122px;top:388px;width:67px;height:25px;border:3px solid #f00;border-radius:3px"></div>
<svg class="a" style="left:11px;top:444px" width="11" height="8" viewBox="0 0 11 8"><path d="M1.5 6.5 L5.5 2 L9.5 6.5" stroke="#444" stroke-width="1.8" fill="none"/></svg>
<div class="t" id="hf" style="letter-spacing:-0.164px;left:29px;top:442px">Hide Folders</div>
<div class="t" id="enc" style="letter-spacing:0.025px;left:241px;top:439px">Encoding:</div>
<div class="a" style="left:300px;top:430px;width:148px;height:27px;background:#e1e1e1;border:1px solid #adadad"></div>
<div class="a" style="left:301px;top:431px;width:146px;height:2px;background:#f8f8f8"></div><div class="a" style="left:301px;top:433px;width:146px;height:1px;background:#a9a9a9"></div>
<div class="t" id="utf" style="letter-spacing:-0.75px;left:303px;top:439px">UTF-16 LE</div>
<svg class="a" style="left:435px;top:442px" width="10" height="7" viewBox="0 0 10 7"><path d="M1 1 L5 5 L9 1" stroke="#444" stroke-width="1.1" fill="none"/></svg>
<div class="a" style="left:298px;top:428px;width:152px;height:31px;border:3px solid #f00;border-radius:3px"></div>
<div class="a" style="left:462px;top:433px;width:86px;height:24px;background:#e1e1e1;border:2px solid #0078d7"></div>
<div class="t" id="save" style="letter-spacing:-0.667px;left:462px;width:86px;text-align:center;top:439px">Save</div>
<div class="a" style="left:562px;top:433px;width:86px;height:24px;background:#e1e1e1;border:1px solid #adadad"></div>
<div class="t" id="cancel" style="letter-spacing:-0.08px;left:562px;width:86px;text-align:center;top:439px">Cancel</div>
<div class="a" style="left:661px;top:459px;width:2px;height:2px;background:#bcbcbc"></div>
<div class="a" style="left:658px;top:462px;width:2px;height:2px;background:#bcbcbc"></div>
<div class="a" style="left:661px;top:462px;width:2px;height:2px;background:#bcbcbc"></div>

<!-- right border -->
<div class="a" style="left:665px;top:0;width:1px;height:466px;background:#a8a8a8"></div><div class="a" style="left:666px;top:0;width:1px;height:466px;background:#5a5a5a"></div>
</body></html>
